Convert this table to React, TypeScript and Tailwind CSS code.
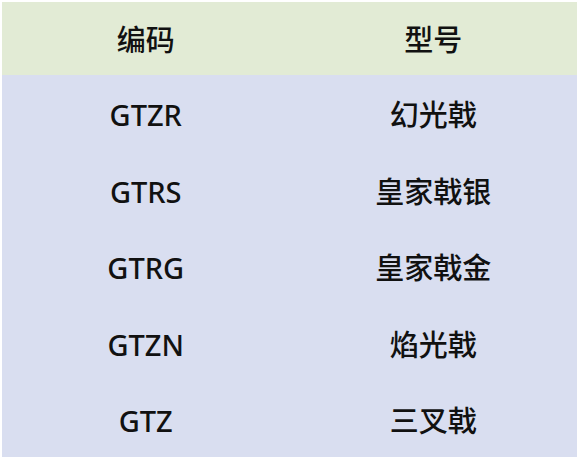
const rows = [
  ['GTZR', '幻光戟'],
  ['GTRS', '皇家戟银'],
  ['GTRG', '皇家戟金'],
  ['GTZN', '焰光戟'],
  ['GTZ', '三叉戟'],
]

export default function App() {
  return (
    <div className="h-[460px] w-[580px] bg-white pl-[2px] pt-[2px]" style={{ fontFamily: '"Noto Sans", "Noto Sans CJK SC", sans-serif' }}>
      <div className="w-[575px] text-[29px] font-medium text-[#111]">
        <div className="grid h-[73px] grid-cols-2 items-center bg-[#e2ebd5] pt-[3px] text-center">
          <div>编码</div>
          <div>型号</div>
        </div>
        <div className="bg-[#d9def0]">
          {rows.map(([code, model]) => (
            <div key={code} className="grid h-[76.4px] grid-cols-2 items-center pt-[4px] text-center">
              <div>{code}</div>
              <div>{model}</div>
            </div>
          ))}
        </div>
      </div>
    </div>
  )
}
